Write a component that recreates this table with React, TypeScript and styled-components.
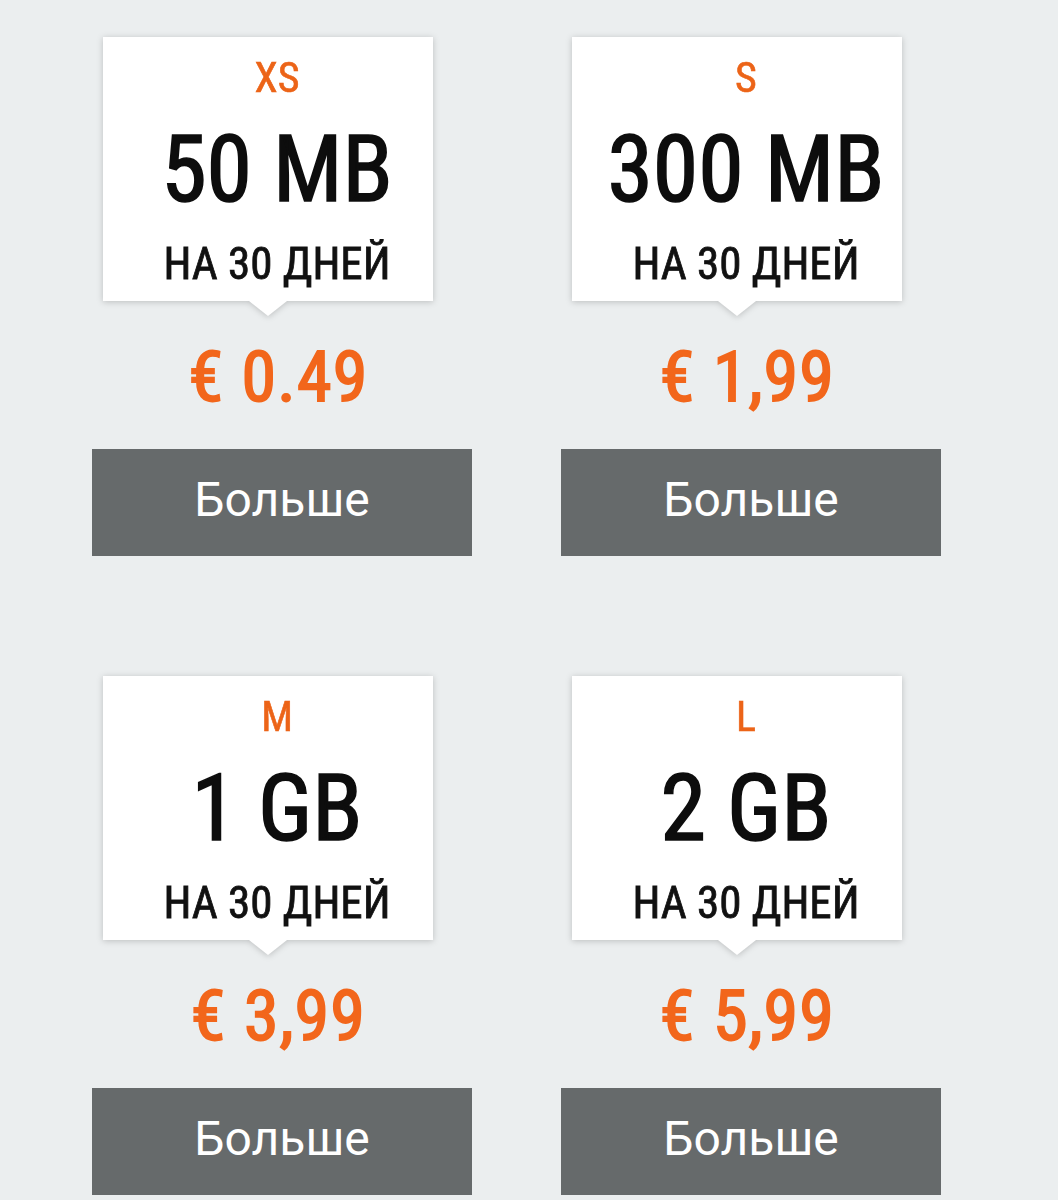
import React from "react";
import styled, { createGlobalStyle } from "styled-components";

const Global = createGlobalStyle`
  html, body {
    margin: 0;
    padding: 0;
    background: #ebeeef;
  }
  body {
    font-family: "Roboto Condensed", "DejaVu Sans Condensed", Roboto, sans-serif;
  }
`;

const Page = styled.main`
  display: grid;
  grid-template-columns: 380px 380px;
  column-gap: 89px;
  row-gap: 120px;
  padding: 37px 0 40px 92px;
  min-height: 1200px;
  box-sizing: border-box;
  align-content: start;
`;

const Plan = styled.section`
  display: flex;
  flex-direction: column;
`;

const Card = styled.div`
  position: relative;
  margin-left: 11px;
  width: 330px;
  box-sizing: border-box;
  padding: 20px 0 15px 18px;
  background: #ffffff;
  display: flex;
  flex-direction: column;
  align-items: center;
  gap: 25px;
  filter: drop-shadow(0 1px 3px rgba(0, 0, 0, 0.2));

  &::after {
    content: "";
    position: absolute;
    left: 50%;
    bottom: -15px;
    transform: translateX(-50%);
    border-left: 19px solid transparent;
    border-right: 19px solid transparent;
    border-top: 15px solid #ffffff;
  }
`;

const Size = styled.div`
  font-size: 42px;
  line-height: 42px;
  color: #ec6418;
  -webkit-text-stroke: 0.6px #ec6418;
`;

const Volume = styled.div`
  font-size: 92px;
  line-height: 92px;
  color: #0d0d0d;
  -webkit-text-stroke: 1.6px #0d0d0d;
  white-space: nowrap;
`;

const Period = styled.div`
  font-size: 45px;
  line-height: 45px;
  color: #111111;
  -webkit-text-stroke: 0.8px #111111;
  white-space: nowrap;
`;

const Price = styled.div`
  margin: 41px 0 0 11px;
  width: 330px;
  box-sizing: border-box;
  padding-left: 21px;
  text-align: center;
  font-size: 70px;
  line-height: 70px;
  font-weight: 400;
  letter-spacing: 1.2px;
  -webkit-text-stroke: 1.8px #f2661b;
  color: #f2661b;
  white-space: nowrap;
`;

const MoreButton = styled.button`
  margin-top: 37px;
  width: 380px;
  height: 107px;
  border: none;
  border-radius: 0;
  background: #666a6b;
  color: #ffffff;
  font-family: Roboto, "Roboto Condensed", sans-serif;
  font-size: 48px;
  font-weight: 400;
  display: flex;
  align-items: center;
  justify-content: center;
  padding: 0 0 6px;
  cursor: pointer;
`;

const plans = [
  { size: "XS", volume: "50 MB", price: "€ 0.49" },
  { size: "S", volume: "300 MB", price: "€ 1,99" },
  { size: "M", volume: "1 GB", price: "€ 3,99" },
  { size: "L", volume: "2 GB", price: "€ 5,99" },
];

export default function App() {
  return (
    <>
      <Global />
      <Page>
        {plans.map((p) => (
          <Plan key={p.size}>
            <Card>
              <Size>{p.size}</Size>
              <Volume>{p.volume}</Volume>
              <Period>НА 30 ДНЕЙ</Period>
            </Card>
            <Price>{p.price}</Price>
            <MoreButton>Больше</MoreButton>
          </Plan>
        ))}
      </Page>
    </>
  );
}
